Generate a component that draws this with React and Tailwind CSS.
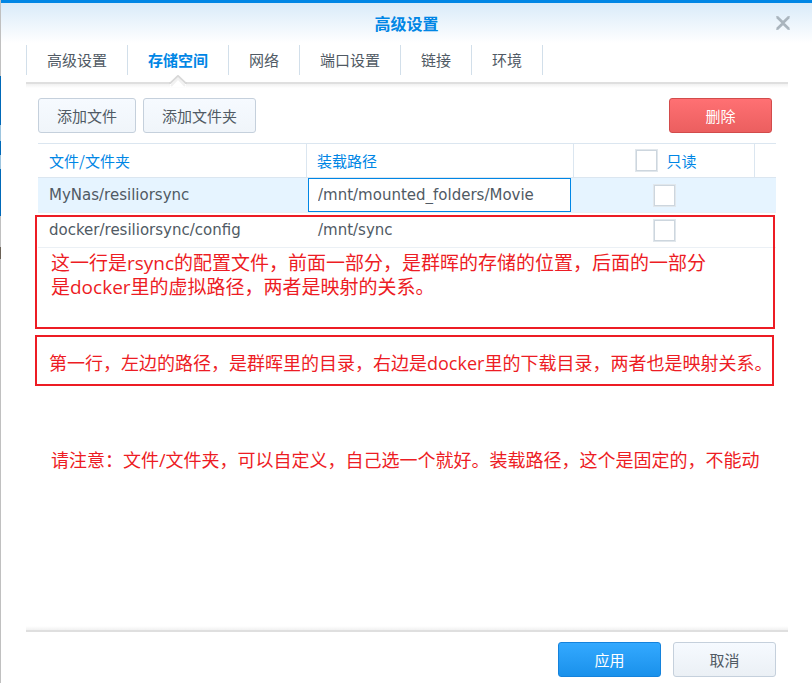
import { useState } from 'react';

const TABS = ['高级设置', '存储空间', '网络', '端口设置', '链接', '环境'];

const VOLUMES = [
  { file: 'MyNas/resiliorsync', mount: '/mnt/mounted_folders/Movie', editing: true },
  { file: 'docker/resiliorsync/config', mount: '/mnt/sync', editing: false },
];

const BUTTON_STYLES = {
  default: 'border-[#c5d0dc] bg-linear-to-b from-[#f6faff] to-[#ebf0f5] text-[#505a64]',
  soft: 'border-[#c5d0dc] bg-linear-to-b from-[#f6faff] to-[#f0f5fa] text-[#505a64]',
  danger: 'border-[#d24b4b] bg-linear-to-b from-[#ff7073] to-[#eb5f5f] text-white',
  primary: 'border-[#1482dc] bg-linear-to-b from-[#33a9ff] to-[#1991eb] text-white',
};

function Button({ variant = 'default', className = '', children }) {
  return (
    <button
      type="button"
      className={`h-[35px] rounded-[3px] border text-[15px] leading-5 ${BUTTON_STYLES[variant]} ${className}`}
    >
      {children}
    </button>
  );
}

function Checkbox({ label, id }) {
  return (
    <input
      id={id}
      type="checkbox"
      aria-label={label}
      className="block size-[23px] shrink-0 appearance-none border border-[#e1e7ec] bg-white inset-ring inset-ring-[#cdd6de] checked:bg-[#0086e5]"
    />
  );
}

/** Barra de título */
function TitleBar() {
  return (
    <header className="flex h-[43px] items-center border-t-3 border-[#0086e5] bg-linear-to-b from-[#d9ebf9] to-white pr-5 pb-px pl-[38px]">
      <h1 className="flex-1 text-center text-base leading-6 font-bold text-[#0086e5]">高级设置</h1>
      <button type="button" aria-label="关闭" className="text-[#a9b4bd]">
        <svg className="block" width="18" height="14" viewBox="0 0 18 14" fill="none" stroke="currentColor" strokeWidth="2.4">
          <path d="M2 0.8 H4.2 L9 5.4 L13.8 0.8 H16 M2 13.2 H4.2 L9 8.6 L13.8 13.2 H16" strokeWidth="1" />
          <path d="M3 1.2 L15 12.8 M15 1.2 L3 12.8" />
        </svg>
      </button>
    </header>
  );
}

function Tabs({ active, onChange }) {
  return (
    <nav className="pt-[2px]">
      <div role="tablist" className="flex h-[37px] border-l border-transparent">
        {TABS.map((tab, i) => (
          <button
            key={tab}
            type="button"
            role="tab"
            aria-selected={tab === active}
            onClick={() => onChange(tab)}
            className={`relative h-[30px] border-r border-[#d2dfea] px-5 text-[15px] leading-5 ${
              tab === active ? 'font-bold text-[#0086e5]' : 'text-[#505a64]'
            } ${i === 0 ? '-ml-px border-l' : ''}`}
          >
            {tab}
            {tab === active && (
              <svg
                className="absolute top-[30px] left-1/2 z-10 -translate-x-1/2"
                width="18"
                height="12"
                viewBox="0 0 18 12"
              >
                <path d="M1 9 L9 1 L17 9 V12 H1 Z" fill="#fff" />
                <path d="M2 11 L9 3.6 L16 11" fill="none" stroke="#f1f1f1" strokeWidth="2" />
                <path d="M0 8 H1.5 L9 0.8 L16.5 8 H18" fill="none" stroke="#d8d8d8" strokeWidth="1.8" />
              </svg>
            )}
          </button>
        ))}
      </div>
      <div className="h-[6px] border-t-2 border-[#dfdfdf] bg-linear-to-b from-[#f1f1f1] to-white" />
    </nav>
  );
}

function VolumeTable() {
  return (
    <table className="w-full table-fixed border-separate border-spacing-0 text-left text-[15px] leading-5 text-[#505a64]">
      <colgroup>
        <col className="w-[269px]" />
        <col />
        <col className="w-[181px]" />
        <col className="w-[21px]" />
      </colgroup>
      <thead>
        <tr className="h-[35px] text-[#0086e5]">
          <th className="border-y border-r border-[#dbe6f0] p-0 pl-[11px] font-normal">文件/文件夹</th>
          <th className="border-y border-r border-[#dbe6f0] p-0 pl-[10px] font-normal">装载路径</th>
          <th className="border-y border-r border-[#dbe6f0] p-0 font-normal">
            <div className="flex items-center justify-center gap-2 pl-1">
              <Checkbox id="readonly-all" label="只读" />
              <label htmlFor="readonly-all">只读</label>
            </div>
          </th>
          <td className="border-y border-[#dbe6f0] p-0" />
        </tr>
      </thead>
      <tbody className="font-['DejaVu_Sans','Noto_Sans_CJK_SC',sans-serif]">
        {VOLUMES.map((v) => (
          <tr key={v.file} className={`h-[35px] ${v.editing ? 'bg-[#e6f4ff]' : ''}`}>
            <td className="border-b border-[#ebf0f5] p-0 pl-[11px]">{v.file}</td>
            {v.editing ? (
              <td className="border-b border-[#ebf0f5] p-0 pr-[3px] pl-px">
                <input
                  type="text"
                  aria-label="装载路径"
                  defaultValue={v.mount}
                  className="block h-[34px] w-full border border-[#0086e5] bg-white pl-[9px] outline-none"
                />
              </td>
            ) : (
              <td className="border-b border-[#ebf0f5] p-0 pl-[11px]">{v.mount}</td>
            )}
            <td className="border-b border-[#ebf0f5] p-0">
              <div className="flex justify-center">
                <Checkbox label={`${v.file} 只读`} />
              </div>
            </td>
            <td className="border-b border-[#ebf0f5] p-0" />
          </tr>
        ))}
      </tbody>
    </table>
  );
}

/** Notas en rojo: la primera enmarca la última fila de la tabla */
function Notes() {
  return (
    <div className="pointer-events-none relative -mt-[33px] -ml-[3px] font-['Open_Sans','Noto_Sans_CJK_SC',sans-serif] text-[18px] leading-6 text-[#ed1c24]">
      <p className="mr-px h-[114px] border-2 border-[#ed1c24] pt-[34px] pl-[14px] text-[19px]">
        这一行是rsync的配置文件，前面一部分，是群晖的存储的位置，后面的一部分
        <br />
        是docker里的虚拟路径，两者是映射的关系。
      </p>
      <p className="mt-[6px] mr-[2px] border-2 border-[#ed1c24] pt-[14px] pb-[9px] pl-3 whitespace-nowrap">
        第一行，左边的路径，是群晖里的目录，右边是docker里的下载目录，两者也是映射关系。
      </p>
      <p className="mt-[62px] pl-4 whitespace-nowrap">
        请注意：文件/文件夹，可以自定义，自己选一个就好。装载路径，这个是固定的，不能动
      </p>
    </div>
  );
}

/** Borde izquierdo con lo que asoma detrás de la ventana */
function Backdrop() {
  return (
    <div className="flex w-px shrink-0 flex-col bg-[#c0c0c0]">
      <div className="h-[76px]" />
      <div className="h-[49px] bg-[#0069b8]" />
      <div className="h-4 bg-[#9cc4de]" />
      <div className="h-[14px] bg-[#0069b8]" />
      <div className="h-[14px] bg-[#9cc4de]" />
      <div className="h-[47px] bg-[#0069b8]" />
      <div className="h-[31px]" />
      <div className="h-3 bg-[#6b6257]" />
    </div>
  );
}

export default function App() {
  const [tab, setTab] = useState('存储空间');

  return (
    <div className="flex min-h-screen bg-white font-['Noto_Sans_CJK_SC',sans-serif]">
      <Backdrop />
      <div className="flex min-w-0 flex-1 flex-col">
        <TitleBar />
        <main className="flex flex-1 flex-col pr-6 pl-[25px]">
          <Tabs active={tab} onChange={setTab} />
          <section className="flex-1 px-3 pt-[10px]">
            <div className="mb-[10px] flex">
              <Button variant="soft" className="px-[18px]">添加文件</Button>
              <Button variant="soft" className="ml-[7px] px-[18px]">添加文件夹</Button>
              <Button variant="danger" className="mr-1 ml-auto w-[103px]">删除</Button>
            </div>
            <VolumeTable />
            <Notes />
          </section>
          <footer>
            <div className="h-[6px] border-b-2 border-[#dfdfdf] bg-linear-to-b from-white to-[#f1f1f1]" />
            <div className="flex justify-end gap-3 px-3 pt-[10px] pb-[6px]">
              <Button variant="primary" className="w-[103px]">应用</Button>
              <Button className="w-[103px]">取消</Button>
            </div>
          </footer>
        </main>
      </div>
    </div>
  );
}
